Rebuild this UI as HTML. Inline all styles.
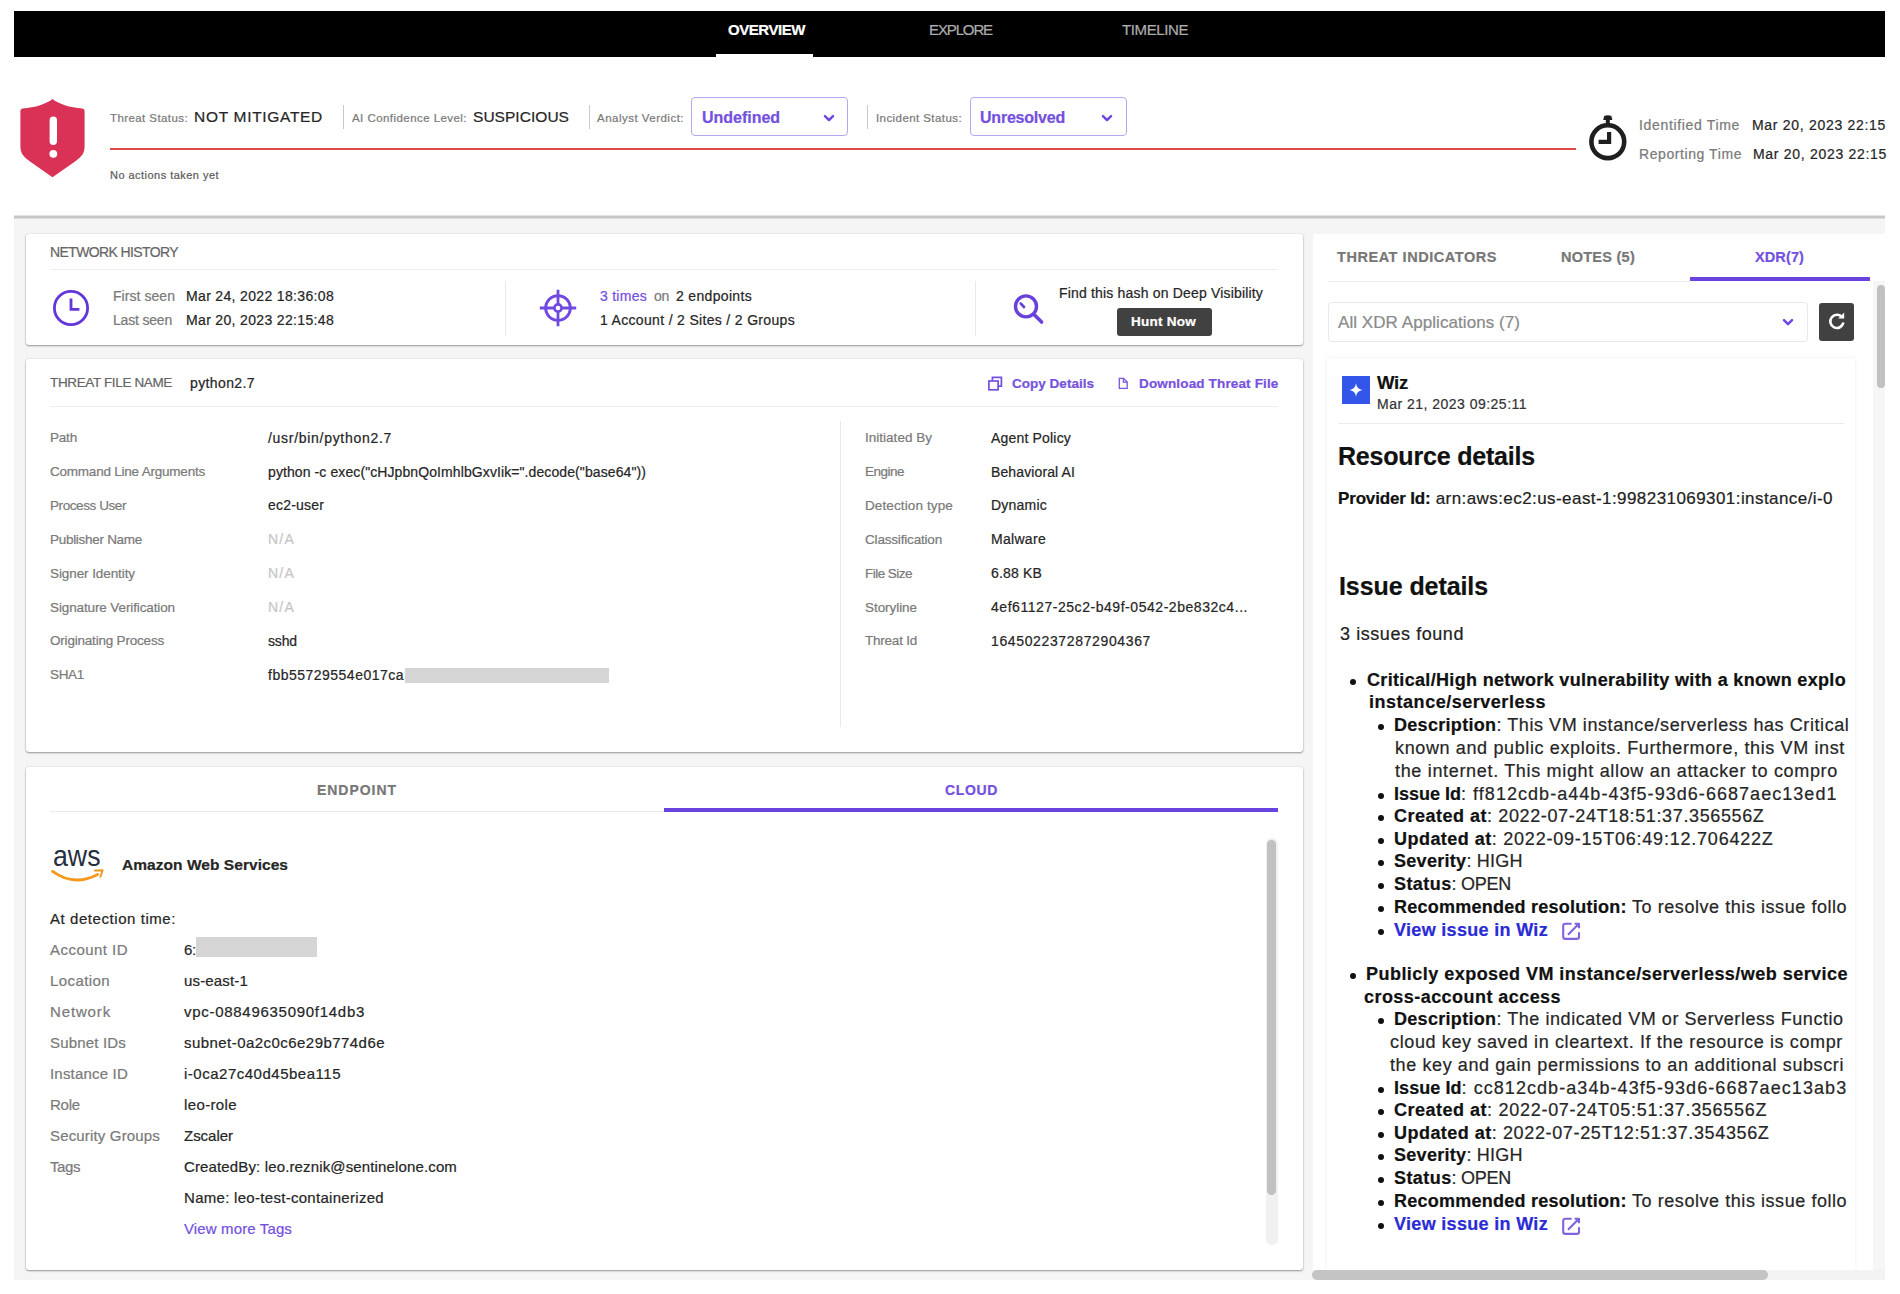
<!DOCTYPE html>
<html lang="en">
<head>
<meta charset="utf-8">
<title>Threat Overview</title>
<style>
*{box-sizing:border-box;margin:0;padding:0}
html,body{width:1900px;height:1294px;overflow:hidden;background:#fff}
body{font-family:"Liberation Sans",sans-serif;position:relative;color:#222}
.a{position:absolute}
.t{position:absolute;white-space:pre;-webkit-text-stroke:0.22px currentColor}
.card{position:absolute;background:#fff;border-radius:3px;box-shadow:0 1px 2px rgba(0,0,0,.38),0 0 2px rgba(0,0,0,.12)}
.hl{position:absolute;height:1px;background:#ededed}
.vl{position:absolute;width:1px;background:#e9e9e9}
</style>
</head>
<body>
<!-- page gray background -->
<div class="a" style="left:14px;top:217px;width:1871px;height:1063px;background:#f5f5f5"></div>
<!-- top nav -->
<div class="a" style="left:14px;top:11px;width:1871px;height:46px;background:#000"></div>
<div class="a" style="left:716px;top:54px;width:97px;height:3px;background:#fff"></div>
<!-- header bottom border -->
<div class="a" style="left:14px;top:214.6px;width:1871px;height:4px;background:linear-gradient(#f2f2f2,#c4c4c4 40%,#c2c2c2 60%,#ececec)"></div>

<!-- shield -->
<svg class="a" style="left:19px;top:97px" width="67" height="82" viewBox="0 0 67 82">
<path d="M33.5 1.9 C28 6.5 16 10.6 3.6 11.5 Q1.4 11.7 1.4 13.9 L1.4 49 C1.4 56.5 4.4 59.6 10.6 64.2 L33.5 80.3 L56.4 64.2 C62.6 59.6 65.6 56.5 65.6 49 L65.6 13.9 Q65.6 11.7 63.4 11.5 C51 10.6 39 6.5 33.5 1.9 Z" fill="#d93256"/>
<rect x="30.6" y="19.6" width="7.4" height="28.4" rx="3.7" fill="#fff"/>
<circle cx="34.3" cy="56.8" r="3.9" fill="#fff"/>
</svg>
<!-- header separators -->
<div class="a" style="left:343px;top:105px;width:1px;height:24px;background:#c9c9c9"></div>
<div class="a" style="left:589px;top:105px;width:1px;height:24px;background:#c9c9c9"></div>
<div class="a" style="left:867px;top:105px;width:1px;height:24px;background:#c9c9c9"></div>
<!-- dropdowns -->
<div class="a" style="left:691px;top:97.2px;width:157px;height:38.6px;border:1.4px solid #b7a5ef;border-radius:4px;background:#fff"></div>
<div class="a" style="left:970px;top:97.2px;width:157px;height:38.6px;border:1.4px solid #b7a5ef;border-radius:4px;background:#fff"></div>
<svg class="a" style="left:822.6px;top:114px" width="12" height="9" viewBox="0 0 12 9"><path d="M2 2.2 L6 6.2 L10 2.2" fill="none" stroke="#6f47e2" stroke-width="2.5" stroke-linecap="round" stroke-linejoin="round"/></svg>
<svg class="a" style="left:1100.6px;top:114px" width="12" height="9" viewBox="0 0 12 9"><path d="M2 2.2 L6 6.2 L10 2.2" fill="none" stroke="#6f47e2" stroke-width="2.5" stroke-linecap="round" stroke-linejoin="round"/></svg>
<!-- red line -->
<div class="a" style="left:110px;top:147.6px;width:1466px;height:2.2px;background:#dc4a45"></div>
<!-- stopwatch -->
<svg class="a" style="left:1587px;top:113px" width="42" height="50" viewBox="0 0 42 50">
<circle cx="20.8" cy="28.7" r="16.4" fill="none" stroke="#1f1f1f" stroke-width="4.6"/>
<rect x="18.8" y="5" width="4" height="8" fill="#1f1f1f"/>
<path d="M16.2 7 L25.4 7 L24.4 3 Q20.8 1.6 17.2 3 Z" fill="#1f1f1f"/>
<path d="M22.1 19 L22.1 28.9 L11.6 28.9" fill="none" stroke="#1f1f1f" stroke-width="4.2"/>
</svg>

<!-- card 1 -->
<div class="card" style="left:26px;top:234px;width:1277px;height:111px"></div>
<div class="hl" style="left:50px;top:269px;width:1228px"></div>
<div class="vl" style="left:505px;top:281px;height:55px"></div>
<div class="vl" style="left:975px;top:281px;height:55px"></div>
<!-- clock icon -->
<svg class="a" style="left:50.5px;top:288px" width="40" height="40" viewBox="0 0 40 40">
<circle cx="20" cy="20" r="16.6" fill="none" stroke="#6236d8" stroke-width="2.8"/>
<path d="M20 10.5 L20 21.3 L28.4 21.3" fill="none" stroke="#6236d8" stroke-width="2.8"/>
</svg>
<!-- target icon -->
<svg class="a" style="left:538.2px;top:288.4px" width="40" height="40" viewBox="0 0 40 40">
<circle cx="20" cy="20" r="12.3" fill="none" stroke="#7049e0" stroke-width="3"/>
<circle cx="20" cy="20" r="3.6" fill="none" stroke="#7049e0" stroke-width="2.6"/>
<path d="M20 1.8 L20 16 M20 24 L20 38.2 M1.8 20 L16 20 M24 20 L38.2 20" fill="none" stroke="#7049e0" stroke-width="2.8"/>
</svg>
<!-- search icon -->
<svg class="a" style="left:1010px;top:291px" width="36" height="36" viewBox="0 0 36 36">
<circle cx="16" cy="15.4" r="10.5" fill="none" stroke="#6a40dc" stroke-width="3.4"/>
<path d="M24 23.4 L31.6 31" fill="none" stroke="#6a40dc" stroke-width="3.6" stroke-linecap="round"/>
<path d="M10.8 12.6 L14 16" fill="none" stroke="#6a40dc" stroke-width="2.8" stroke-linecap="round"/>
</svg>
<div class="a" style="left:1117px;top:307.6px;width:95px;height:28.2px;background:#414141;border-radius:3px"></div>

<!-- card 2 -->
<div class="card" style="left:26px;top:359px;width:1277px;height:393px"></div>
<div class="hl" style="left:50px;top:406px;width:1228px"></div>
<div class="vl" style="left:840px;top:421px;height:306px"></div>
<div class="a" style="left:405px;top:668px;width:204px;height:15px;background:#d5d5d5"></div>
<!-- copy icon -->
<svg class="a" style="left:988px;top:376.2px" width="16" height="16" viewBox="0 0 16 16">
<rect x="0.9" y="5" width="9.2" height="8.8" fill="none" stroke="#7450e0" stroke-width="1.7"/>
<path d="M4.4 4.8 L4.4 1.3 L13.4 1.3 L13.4 10.2 L10.4 10.2" fill="none" stroke="#7450e0" stroke-width="1.7"/>
</svg>
<!-- file icon -->
<svg class="a" style="left:1118px;top:377px" width="11" height="13" viewBox="0 0 11 13">
<path d="M1.3 1.3 L5.6 1.3 L9.2 4.9 L9.2 11.4 L1.3 11.4 Z M5.4 1.5 L5.4 5.1 L9 5.1" fill="none" stroke="#7a55e0" stroke-width="1.3"/>
</svg>

<!-- card 3 -->
<div class="card" style="left:26px;top:767px;width:1277px;height:503px"></div>
<div class="hl" style="left:50px;top:811px;width:614px;background:#ebebeb"></div>
<div class="a" style="left:664px;top:808px;width:614px;height:4px;background:#6a42de"></div>
<div class="a" style="left:1266px;top:838px;width:12px;height:407px;background:#f1f1f1;border-radius:6px"></div>
<div class="a" style="left:1267px;top:840px;width:9px;height:355px;background:#c1c1c1;border-radius:5px"></div>
<div class="a" style="left:196px;top:937px;width:121px;height:20px;background:#d5d5d5"></div>
<!-- aws logo -->
<svg class="a" style="left:48px;top:842px" width="60" height="44" viewBox="0 0 60 44">
<text x="5" y="24.4" font-family="Liberation Sans, sans-serif" font-size="29" fill="#252f3e" textLength="47.5" lengthAdjust="spacingAndGlyphs">aws</text>
<path d="M4.6 29.4 Q26 45 49.6 32.4" fill="none" stroke="#f39a1e" stroke-width="2.8" stroke-linecap="round"/>
<path d="M47 28.6 L54.6 28.2 L52.4 34.8" fill="none" stroke="#f39a1e" stroke-width="2" stroke-linecap="round" stroke-linejoin="round"/>
</svg>

<!-- right panel -->
<div class="a" style="left:1313px;top:234px;width:572px;height:1046px;background:#fff;border-radius:3px 0 0 0"></div>
<div class="a" style="left:1873px;top:281px;width:12px;height:990px;background:#f6f6f6"></div>
<div class="hl" style="left:1328px;top:281px;width:362px;background:#ececec"></div>
<div class="a" style="left:1690px;top:277px;width:180px;height:4px;background:#6a42de"></div>
<div class="a" style="left:1877px;top:285px;width:8px;height:103px;background:#c1c1c1;border-radius:4px"></div>
<div class="a" style="left:1328px;top:302px;width:480px;height:40px;border:1px solid #e9e9e9;border-radius:4px;background:#fff"></div>
<svg class="a" style="left:1782px;top:318px" width="12" height="9" viewBox="0 0 12 9"><path d="M2 2.2 L6 6.2 L10 2.2" fill="none" stroke="#6f47e2" stroke-width="2.5" stroke-linecap="round" stroke-linejoin="round"/></svg>
<div class="a" style="left:1819px;top:303px;width:35px;height:38px;background:#414141;border-radius:3px"></div>
<svg class="a" style="left:1826.5px;top:311px" width="20" height="20" viewBox="0 0 20 20">
<path d="M15.2 6.4 A6.6 6.6 0 1 0 16.4 11.6" fill="none" stroke="#fff" stroke-width="2.6"/>
<path d="M11.2 7.4 L17.2 7.4 L17.2 1.6 Z" fill="#fff"/>
</svg>
<!-- wiz card -->
<div class="a" style="left:1327px;top:358px;width:528px;height:912px;background:#fff;box-shadow:0 0 4px rgba(0,0,0,.08)"></div>
<div class="a" style="left:1341.5px;top:375.6px;width:28.3px;height:28.4px;background:#3355ea"></div>
<svg class="a" style="left:1347.6px;top:382.4px" width="16" height="16" viewBox="0 0 14 14"><path d="M7 1.2 Q7.6 6.4 12.8 7 Q7.6 7.6 7 12.8 Q6.4 7.6 1.2 7 Q6.4 6.4 7 1.2 Z" fill="#fff"/></svg>
<div class="hl" style="left:1338px;top:423px;width:506px;background:#ececec"></div>
<!-- bottom scroll bar -->
<div class="a" style="left:1312px;top:1270px;width:573px;height:10px;background:#f3f3f3"></div>
<div class="a" style="left:1312px;top:1270px;width:456px;height:10px;background:#c4c4c4;border-radius:5px"></div>

<div class="a" style="left:1350.0px;top:679.0px;width:6px;height:6px;border-radius:3px;background:#111"></div>
<div class="a" style="left:1377.5px;top:724.0px;width:6px;height:6px;border-radius:3px;background:#111"></div>
<div class="a" style="left:1377.5px;top:793.0px;width:6px;height:6px;border-radius:3px;background:#111"></div>
<div class="a" style="left:1377.5px;top:815.0px;width:6px;height:6px;border-radius:3px;background:#111"></div>
<div class="a" style="left:1377.5px;top:838.0px;width:6px;height:6px;border-radius:3px;background:#111"></div>
<div class="a" style="left:1377.5px;top:860.0px;width:6px;height:6px;border-radius:3px;background:#111"></div>
<div class="a" style="left:1377.5px;top:883.0px;width:6px;height:6px;border-radius:3px;background:#111"></div>
<div class="a" style="left:1377.5px;top:906.0px;width:6px;height:6px;border-radius:3px;background:#111"></div>
<div class="a" style="left:1377.5px;top:929.0px;width:6px;height:6px;border-radius:3px;background:#111"></div>
<div class="a" style="left:1350.0px;top:973.1px;width:6px;height:6px;border-radius:3px;background:#111"></div>
<div class="a" style="left:1377.5px;top:1018.1px;width:6px;height:6px;border-radius:3px;background:#111"></div>
<div class="a" style="left:1377.5px;top:1087.1px;width:6px;height:6px;border-radius:3px;background:#111"></div>
<div class="a" style="left:1377.5px;top:1109.1px;width:6px;height:6px;border-radius:3px;background:#111"></div>
<div class="a" style="left:1377.5px;top:1132.1px;width:6px;height:6px;border-radius:3px;background:#111"></div>
<div class="a" style="left:1377.5px;top:1154.1px;width:6px;height:6px;border-radius:3px;background:#111"></div>
<div class="a" style="left:1377.5px;top:1177.1px;width:6px;height:6px;border-radius:3px;background:#111"></div>
<div class="a" style="left:1377.5px;top:1200.1px;width:6px;height:6px;border-radius:3px;background:#111"></div>
<div class="a" style="left:1377.5px;top:1223.1px;width:6px;height:6px;border-radius:3px;background:#111"></div>
<svg class="a" style="left:1562px;top:920.0px" width="20" height="22" viewBox="0 0 20 22"><path d="M9.6 3.7 L3.4 3.7 Q1.2 3.7 1.2 5.9 L1.2 16.7 Q1.2 18.9 3.4 18.9 L14.8 18.9 Q17 18.9 17 16.7 L17 12.2 M12.6 3.7 L17 3.7 L17 8.2 M6 14.8 L16.6 4.1" fill="none" stroke="#8163de" stroke-width="2.1" stroke-linejoin="round"/></svg>
<svg class="a" style="left:1562px;top:1214.7px" width="20" height="22" viewBox="0 0 20 22"><path d="M9.6 3.7 L3.4 3.7 Q1.2 3.7 1.2 5.9 L1.2 16.7 Q1.2 18.9 3.4 18.9 L14.8 18.9 Q17 18.9 17 16.7 L17 12.2 M12.6 3.7 L17 3.7 L17 8.2 M6 14.8 L16.6 4.1" fill="none" stroke="#8163de" stroke-width="2.1" stroke-linejoin="round"/></svg>
<span class="t" style="left:728px;top:19.4px;font-size:15px;line-height:21px;color:#fff;font-weight:700;letter-spacing:-0.447px;">OVERVIEW</span>
<span class="t" style="left:929px;top:19.4px;font-size:15px;line-height:21px;color:#adadad;letter-spacing:-1.125px;">EXPLORE</span>
<span class="t" style="left:1122px;top:19.4px;font-size:15px;line-height:21px;color:#adadad;letter-spacing:-0.398px;">TIMELINE</span>
<span class="t" style="left:110px;top:110.4px;font-size:11.5px;line-height:16px;color:#7a7a7a;letter-spacing:0.412px;">Threat Status:</span>
<span class="t" style="left:194px;top:105.5px;font-size:15.5px;line-height:22px;color:#262626;letter-spacing:0.694px;">NOT MITIGATED</span>
<span class="t" style="left:352px;top:110.4px;font-size:11.5px;line-height:16px;color:#7a7a7a;letter-spacing:0.444px;">AI Confidence Level:</span>
<span class="t" style="left:473px;top:105.5px;font-size:15.5px;line-height:22px;color:#262626;letter-spacing:0.039px;">SUSPICIOUS</span>
<span class="t" style="left:597px;top:110.4px;font-size:11.5px;line-height:16px;color:#7a7a7a;letter-spacing:0.483px;">Analyst Verdict:</span>
<span class="t" style="left:702px;top:107.0px;font-size:16px;line-height:22px;color:#7450e0;font-weight:700;letter-spacing:-0.024px;">Undefined</span>
<span class="t" style="left:876px;top:110.4px;font-size:11.5px;line-height:16px;color:#7a7a7a;letter-spacing:0.420px;">Incident Status:</span>
<span class="t" style="left:980px;top:107.0px;font-size:16px;line-height:22px;color:#7450e0;font-weight:700;letter-spacing:-0.214px;">Unresolved</span>
<span class="t" style="left:110px;top:167.7px;font-size:11px;line-height:15px;color:#5c5c5c;letter-spacing:0.466px;">No actions taken yet</span>
<span class="t" style="left:1639px;top:114.8px;font-size:14px;line-height:20px;color:#7a7a7a;letter-spacing:0.662px;">Identified Time</span>
<span class="t" style="left:1752px;top:114.8px;font-size:14px;line-height:20px;color:#262626;letter-spacing:0.699px;">Mar 20, 2023 22:15</span>
<span class="t" style="left:1639px;top:143.8px;font-size:14px;line-height:20px;color:#7a7a7a;letter-spacing:0.576px;">Reporting Time</span>
<span class="t" style="left:1753px;top:143.8px;font-size:14px;line-height:20px;color:#262626;letter-spacing:0.699px;">Mar 20, 2023 22:15</span>
<span class="t" style="left:50px;top:241.7px;font-size:14px;line-height:20px;color:#666;letter-spacing:-0.611px;">NETWORK HISTORY</span>
<span class="t" style="left:113px;top:285.9px;font-size:14px;line-height:20px;color:#7a7a7a;letter-spacing:0.053px;">First seen</span>
<span class="t" style="left:186px;top:285.9px;font-size:14px;line-height:20px;color:#262626;letter-spacing:0.339px;">Mar 24, 2022 18:36:08</span>
<span class="t" style="left:113px;top:309.9px;font-size:14px;line-height:20px;color:#7a7a7a;letter-spacing:-0.191px;">Last seen</span>
<span class="t" style="left:186px;top:309.9px;font-size:14px;line-height:20px;color:#262626;letter-spacing:0.339px;">Mar 20, 2023 22:15:48</span>
<span class="t" style="left:600px;top:285.9px;font-size:14px;line-height:20px;color:#7450e0;letter-spacing:0.268px;">3 times</span>
<span class="t" style="left:654px;top:285.9px;font-size:14px;line-height:20px;color:#7a7a7a;letter-spacing:-0.289px;">on</span>
<span class="t" style="left:676px;top:285.9px;font-size:14px;line-height:20px;color:#262626;letter-spacing:0.327px;">2 endpoints</span>
<span class="t" style="left:600px;top:309.9px;font-size:14px;line-height:20px;color:#262626;letter-spacing:0.326px;">1 Account / 2 Sites / 2 Groups</span>
<span class="t" style="left:1059px;top:283.1px;font-size:14px;line-height:20px;color:#262626;letter-spacing:0.176px;">Find this hash on Deep Visibility</span>
<span class="t" style="left:1131px;top:311.8px;font-size:13.5px;line-height:19px;color:#fff;font-weight:700;letter-spacing:0.250px;">Hunt Now</span>
<span class="t" style="left:50px;top:372.9px;font-size:13.5px;line-height:19px;color:#666;letter-spacing:-0.361px;">THREAT FILE NAME</span>
<span class="t" style="left:190px;top:372.6px;font-size:14px;line-height:20px;color:#262626;letter-spacing:0.389px;">python2.7</span>
<span class="t" style="left:1012px;top:373.5px;font-size:13.5px;line-height:19px;color:#7652dd;font-weight:700;letter-spacing:0.018px;">Copy Details</span>
<span class="t" style="left:1139px;top:373.5px;font-size:13.5px;line-height:19px;color:#7652dd;font-weight:700;letter-spacing:0.149px;">Download Threat File</span>
<span class="t" style="left:50px;top:428.1px;font-size:13.5px;line-height:19px;color:#7a7a7a;letter-spacing:-0.195px;">Path</span>
<span class="t" style="left:268px;top:427.6px;font-size:14px;line-height:20px;color:#262626;letter-spacing:0.706px;">/usr/bin/python2.7</span>
<span class="t" style="left:50px;top:462.0px;font-size:13.5px;line-height:19px;color:#7a7a7a;letter-spacing:-0.220px;">Command Line Arguments</span>
<span class="t" style="left:268px;top:461.5px;font-size:14px;line-height:20px;color:#262626;letter-spacing:0.095px;">python -c exec(&quot;cHJpbnQoImhlbGxvIik=&quot;.decode(&quot;base64&quot;))</span>
<span class="t" style="left:50px;top:495.8px;font-size:13.5px;line-height:19px;color:#7a7a7a;letter-spacing:-0.419px;">Process User</span>
<span class="t" style="left:268px;top:495.3px;font-size:14px;line-height:20px;color:#262626;letter-spacing:0.191px;">ec2-user</span>
<span class="t" style="left:50px;top:529.7px;font-size:13.5px;line-height:19px;color:#7a7a7a;letter-spacing:-0.289px;">Publisher Name</span>
<span class="t" style="left:268px;top:529.2px;font-size:14px;line-height:20px;color:#c6c6c6;letter-spacing:1.219px;">N/A</span>
<span class="t" style="left:50px;top:563.6px;font-size:13.5px;line-height:19px;color:#7a7a7a;letter-spacing:-0.087px;">Signer Identity</span>
<span class="t" style="left:268px;top:563.1px;font-size:14px;line-height:20px;color:#c6c6c6;letter-spacing:1.219px;">N/A</span>
<span class="t" style="left:50px;top:597.5px;font-size:13.5px;line-height:19px;color:#7a7a7a;letter-spacing:-0.117px;">Signature Verification</span>
<span class="t" style="left:268px;top:597.0px;font-size:14px;line-height:20px;color:#c6c6c6;letter-spacing:1.219px;">N/A</span>
<span class="t" style="left:50px;top:631.3px;font-size:13.5px;line-height:19px;color:#7a7a7a;letter-spacing:-0.201px;">Originating Process</span>
<span class="t" style="left:268px;top:630.8px;font-size:14px;line-height:20px;color:#262626;letter-spacing:-0.145px;">sshd</span>
<span class="t" style="left:50px;top:665.2px;font-size:13.5px;line-height:19px;color:#7a7a7a;letter-spacing:-0.320px;">SHA1</span>
<span class="t" style="left:268px;top:664.7px;font-size:14px;line-height:20px;color:#262626;letter-spacing:0.489px;">fbb55729554e017ca</span>
<span class="t" style="left:865px;top:428.1px;font-size:13.5px;line-height:19px;color:#7a7a7a;letter-spacing:0.017px;">Initiated By</span>
<span class="t" style="left:991px;top:427.6px;font-size:14px;line-height:20px;color:#262626;letter-spacing:0.181px;">Agent Policy</span>
<span class="t" style="left:865px;top:462.0px;font-size:13.5px;line-height:19px;color:#7a7a7a;letter-spacing:-0.508px;">Engine</span>
<span class="t" style="left:991px;top:461.5px;font-size:14px;line-height:20px;color:#262626;letter-spacing:0.115px;">Behavioral AI</span>
<span class="t" style="left:865px;top:495.8px;font-size:13.5px;line-height:19px;color:#7a7a7a;letter-spacing:0.121px;">Detection type</span>
<span class="t" style="left:991px;top:495.3px;font-size:14px;line-height:20px;color:#262626;letter-spacing:0.219px;">Dynamic</span>
<span class="t" style="left:865px;top:529.7px;font-size:13.5px;line-height:19px;color:#7a7a7a;letter-spacing:-0.181px;">Classification</span>
<span class="t" style="left:991px;top:529.2px;font-size:14px;line-height:20px;color:#262626;letter-spacing:0.299px;">Malware</span>
<span class="t" style="left:865px;top:563.6px;font-size:13.5px;line-height:19px;color:#7a7a7a;letter-spacing:-0.530px;">File Size</span>
<span class="t" style="left:991px;top:563.1px;font-size:14px;line-height:20px;color:#262626;letter-spacing:0.167px;">6.88 KB</span>
<span class="t" style="left:865px;top:597.5px;font-size:13.5px;line-height:19px;color:#7a7a7a;letter-spacing:-0.059px;">Storyline</span>
<span class="t" style="left:991px;top:597.0px;font-size:14px;line-height:20px;color:#262626;letter-spacing:0.545px;">4ef61127-25c2-b49f-0542-2be832c4...</span>
<span class="t" style="left:865px;top:631.3px;font-size:13.5px;line-height:19px;color:#7a7a7a;letter-spacing:-0.226px;">Threat Id</span>
<span class="t" style="left:991px;top:630.8px;font-size:14px;line-height:20px;color:#262626;letter-spacing:0.635px;">1645022372872904367</span>
<span class="t" style="left:317px;top:779.6px;font-size:14px;line-height:20px;color:#777;font-weight:700;letter-spacing:0.957px;">ENDPOINT</span>
<span class="t" style="left:945px;top:779.6px;font-size:14px;line-height:20px;color:#7450e0;font-weight:700;letter-spacing:0.644px;">CLOUD</span>
<span class="t" style="left:122px;top:853.6px;font-size:15.5px;line-height:22px;color:#262626;font-weight:700;letter-spacing:0.046px;">Amazon Web Services</span>
<span class="t" style="left:50px;top:907.5px;font-size:15px;line-height:21px;color:#262626;letter-spacing:0.561px;">At detection time:</span>
<span class="t" style="left:50px;top:938.7px;font-size:15px;line-height:21px;color:#7a7a7a;letter-spacing:0.463px;">Account ID</span>
<span class="t" style="left:184px;top:938.7px;font-size:15px;line-height:21px;color:#262626;letter-spacing:-0.258px;">6:</span>
<span class="t" style="left:50px;top:969.7px;font-size:15px;line-height:21px;color:#7a7a7a;letter-spacing:0.410px;">Location</span>
<span class="t" style="left:184px;top:969.7px;font-size:15px;line-height:21px;color:#262626;letter-spacing:0.163px;">us-east-1</span>
<span class="t" style="left:50px;top:1000.7px;font-size:15px;line-height:21px;color:#7a7a7a;letter-spacing:0.855px;">Network</span>
<span class="t" style="left:184px;top:1000.7px;font-size:15px;line-height:21px;color:#262626;letter-spacing:0.715px;">vpc-08849635090f14db3</span>
<span class="t" style="left:50px;top:1031.7px;font-size:15px;line-height:21px;color:#7a7a7a;letter-spacing:0.178px;">Subnet IDs</span>
<span class="t" style="left:184px;top:1031.7px;font-size:15px;line-height:21px;color:#262626;letter-spacing:0.451px;">subnet-0a2c0c6e29b774d6e</span>
<span class="t" style="left:50px;top:1062.7px;font-size:15px;line-height:21px;color:#7a7a7a;letter-spacing:0.193px;">Instance ID</span>
<span class="t" style="left:184px;top:1062.7px;font-size:15px;line-height:21px;color:#262626;letter-spacing:0.507px;">i-0ca27c40d45bea115</span>
<span class="t" style="left:50px;top:1093.7px;font-size:15px;line-height:21px;color:#7a7a7a;letter-spacing:-0.215px;">Role</span>
<span class="t" style="left:184px;top:1093.7px;font-size:15px;line-height:21px;color:#262626;letter-spacing:0.371px;">leo-role</span>
<span class="t" style="left:50px;top:1124.7px;font-size:15px;line-height:21px;color:#7a7a7a;letter-spacing:0.164px;">Security Groups</span>
<span class="t" style="left:184px;top:1124.7px;font-size:15px;line-height:21px;color:#262626;letter-spacing:-0.027px;">Zscaler</span>
<span class="t" style="left:50px;top:1155.7px;font-size:15px;line-height:21px;color:#7a7a7a;letter-spacing:-0.422px;">Tags</span>
<span class="t" style="left:184px;top:1155.7px;font-size:15px;line-height:21px;color:#262626;letter-spacing:0.139px;">CreatedBy: leo.reznik@sentinelone.com</span>
<span class="t" style="left:184px;top:1186.7px;font-size:15px;line-height:21px;color:#262626;letter-spacing:0.294px;">Name: leo-test-containerized</span>
<span class="t" style="left:184px;top:1217.7px;font-size:15px;line-height:21px;color:#7450e0;letter-spacing:0.131px;">View more Tags</span>
<span class="t" style="left:1337px;top:246.8px;font-size:14.5px;line-height:20px;color:#777;font-weight:700;letter-spacing:0.551px;">THREAT INDICATORS</span>
<span class="t" style="left:1561px;top:246.8px;font-size:14.5px;line-height:20px;color:#777;font-weight:700;letter-spacing:0.255px;">NOTES (5)</span>
<span class="t" style="left:1755px;top:246.8px;font-size:14.5px;line-height:20px;color:#7450e0;font-weight:700;letter-spacing:0.109px;">XDR(7)</span>
<span class="t" style="left:1338px;top:310.6px;font-size:17px;line-height:24px;color:#8a8a8a;letter-spacing:0.064px;">All XDR Applications (7)</span>
<span class="t" style="left:1377px;top:370.1px;font-size:18.5px;line-height:26px;color:#111;font-weight:700;letter-spacing:-0.234px;">Wiz</span>
<span class="t" style="left:1377px;top:393.6px;font-size:14px;line-height:20px;color:#333;letter-spacing:0.484px;">Mar 21, 2023 09:25:11</span>
<span class="t" style="left:1338px;top:439.1px;font-size:25px;line-height:35px;color:#111;font-weight:700;letter-spacing:-0.193px;">Resource details</span>
<span class="t" style="left:1338px;top:486.6px;font-size:17px;line-height:24px;color:#111;font-weight:700;letter-spacing:-0.164px;">Provider Id:</span>
<span class="t" style="left:1430.5px;top:486.6px;font-size:17px;line-height:24px;color:#222;letter-spacing:0.431px;"> arn:aws:ec2:us-east-1:998231069301:instance/i-0</span>
<span class="t" style="left:1339px;top:569.1px;font-size:25px;line-height:35px;color:#111;font-weight:700;letter-spacing:-0.083px;">Issue details</span>
<span class="t" style="left:1340px;top:622.1px;font-size:18px;line-height:25px;color:#222;letter-spacing:0.566px;">3 issues found</span>
<span class="t" style="left:1367px;top:668.3px;font-size:18px;line-height:25px;color:#111;font-weight:700;letter-spacing:0.332px;">Critical/High network vulnerability with a known explo</span>
<span class="t" style="left:1369px;top:690.3px;font-size:18px;line-height:25px;color:#111;font-weight:700;letter-spacing:0.520px;">instance/serverless</span>
<span class="t" style="left:1394px;top:713.3px;font-size:18px;line-height:25px;color:#111;font-weight:700;letter-spacing:0.306px;">Description</span>
<span class="t" style="left:1496.4px;top:713.3px;font-size:18px;line-height:25px;color:#262626;letter-spacing:0.577px;">: This VM instance/serverless has Critical</span>
<span class="t" style="left:1395px;top:736.3px;font-size:18px;line-height:25px;color:#262626;letter-spacing:0.631px;">known and public exploits. Furthermore, this VM inst</span>
<span class="t" style="left:1395px;top:759.3px;font-size:18px;line-height:25px;color:#262626;letter-spacing:0.675px;">the internet. This might allow an attacker to compro</span>
<span class="t" style="left:1394px;top:782.3px;font-size:18px;line-height:25px;color:#111;font-weight:700;letter-spacing:-0.004px;">Issue Id</span>
<span class="t" style="left:1461px;top:782.3px;font-size:18px;line-height:25px;color:#262626;letter-spacing:1.041px;">: ff812cdb-a44b-43f5-93d6-6687aec13ed1</span>
<span class="t" style="left:1394px;top:804.3px;font-size:18px;line-height:25px;color:#111;font-weight:700;letter-spacing:0.497px;">Created at</span>
<span class="t" style="left:1487px;top:804.3px;font-size:18px;line-height:25px;color:#262626;letter-spacing:0.631px;">: 2022-07-24T18:51:37.356556Z</span>
<span class="t" style="left:1394px;top:827.3px;font-size:18px;line-height:25px;color:#111;font-weight:700;letter-spacing:0.468px;">Updated at</span>
<span class="t" style="left:1491.7px;top:827.3px;font-size:18px;line-height:25px;color:#262626;letter-spacing:0.783px;">: 2022-09-15T06:49:12.706422Z</span>
<span class="t" style="left:1394px;top:849.3px;font-size:18px;line-height:25px;color:#111;font-weight:700;letter-spacing:0.292px;">Severity</span>
<span class="t" style="left:1466.4px;top:849.3px;font-size:18px;line-height:25px;color:#262626;letter-spacing:0.197px;">: HIGH</span>
<span class="t" style="left:1394px;top:872.3px;font-size:18px;line-height:25px;color:#111;font-weight:700;letter-spacing:0.431px;">Status</span>
<span class="t" style="left:1451.6px;top:872.3px;font-size:18px;line-height:25px;color:#262626;letter-spacing:-0.269px;">: OPEN</span>
<span class="t" style="left:1394px;top:895.3px;font-size:18px;line-height:25px;color:#111;font-weight:700;letter-spacing:0.251px;">Recommended resolution:</span>
<span class="t" style="left:1626.8px;top:895.3px;font-size:18px;line-height:25px;color:#262626;letter-spacing:0.558px;"> To resolve this issue follo</span>
<span class="t" style="left:1394px;top:918.3px;font-size:18px;line-height:25px;color:#2b2bd6;font-weight:700;letter-spacing:0.320px;">View issue in Wiz</span>
<span class="t" style="left:1366px;top:962.4px;font-size:18px;line-height:25px;color:#111;font-weight:700;letter-spacing:0.466px;">Publicly exposed VM instance/serverless/web service</span>
<span class="t" style="left:1364px;top:985.4px;font-size:18px;line-height:25px;color:#111;font-weight:700;letter-spacing:0.445px;">cross-account access</span>
<span class="t" style="left:1394px;top:1007.4px;font-size:18px;line-height:25px;color:#111;font-weight:700;letter-spacing:0.306px;">Description</span>
<span class="t" style="left:1496.4px;top:1007.4px;font-size:18px;line-height:25px;color:#262626;letter-spacing:0.562px;">: The indicated VM or Serverless Functio</span>
<span class="t" style="left:1390px;top:1030.4px;font-size:18px;line-height:25px;color:#262626;letter-spacing:0.626px;">cloud key saved in cleartext. If the resource is compr</span>
<span class="t" style="left:1390px;top:1053.4px;font-size:18px;line-height:25px;color:#262626;letter-spacing:0.599px;">the key and gain permissions to an additional subscri</span>
<span class="t" style="left:1394px;top:1076.4px;font-size:18px;line-height:25px;color:#111;font-weight:700;letter-spacing:0.059px;">Issue Id</span>
<span class="t" style="left:1461.5px;top:1076.4px;font-size:18px;line-height:25px;color:#262626;letter-spacing:1.064px;">: cc812cdb-a34b-43f5-93d6-6687aec13ab3</span>
<span class="t" style="left:1394px;top:1098.4px;font-size:18px;line-height:25px;color:#111;font-weight:700;letter-spacing:0.497px;">Created at</span>
<span class="t" style="left:1487px;top:1098.4px;font-size:18px;line-height:25px;color:#262626;letter-spacing:0.727px;">: 2022-07-24T05:51:37.356556Z</span>
<span class="t" style="left:1394px;top:1121.4px;font-size:18px;line-height:25px;color:#111;font-weight:700;letter-spacing:0.468px;">Updated at</span>
<span class="t" style="left:1491.7px;top:1121.4px;font-size:18px;line-height:25px;color:#262626;letter-spacing:0.641px;">: 2022-07-25T12:51:37.354356Z</span>
<span class="t" style="left:1394px;top:1143.4px;font-size:18px;line-height:25px;color:#111;font-weight:700;letter-spacing:0.292px;">Severity</span>
<span class="t" style="left:1466.4px;top:1143.4px;font-size:18px;line-height:25px;color:#262626;letter-spacing:0.197px;">: HIGH</span>
<span class="t" style="left:1394px;top:1166.4px;font-size:18px;line-height:25px;color:#111;font-weight:700;letter-spacing:0.431px;">Status</span>
<span class="t" style="left:1451.6px;top:1166.4px;font-size:18px;line-height:25px;color:#262626;letter-spacing:-0.269px;">: OPEN</span>
<span class="t" style="left:1394px;top:1189.4px;font-size:18px;line-height:25px;color:#111;font-weight:700;letter-spacing:0.251px;">Recommended resolution:</span>
<span class="t" style="left:1626.8px;top:1189.4px;font-size:18px;line-height:25px;color:#262626;letter-spacing:0.558px;"> To resolve this issue follo</span>
<span class="t" style="left:1394px;top:1212.4px;font-size:18px;line-height:25px;color:#2b2bd6;font-weight:700;letter-spacing:0.320px;">View issue in Wiz</span>
</body>
</html>
